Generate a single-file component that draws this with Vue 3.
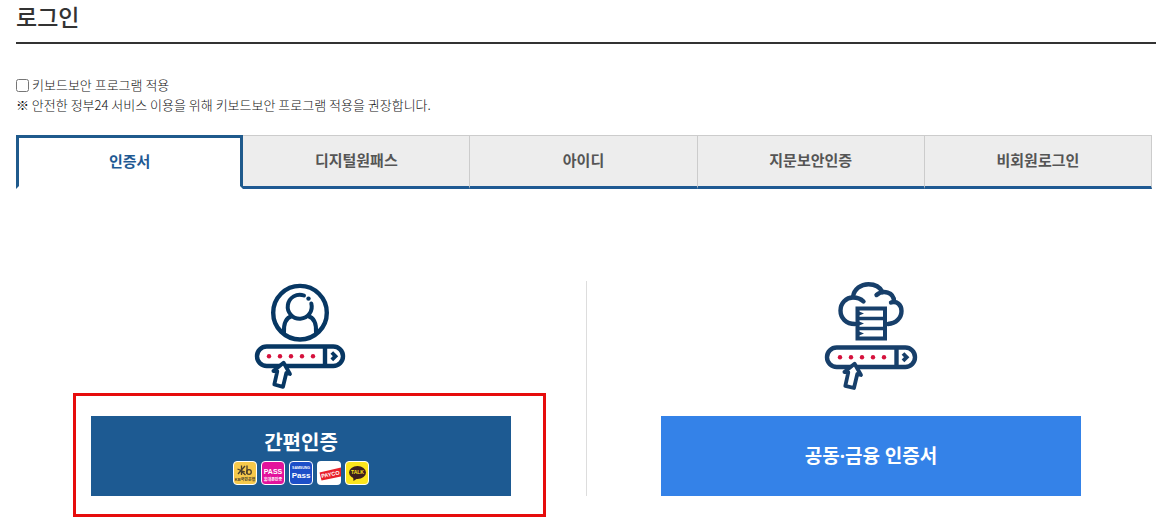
<script setup>
import { ref } from 'vue'

const keyboardSecurity = ref(false)
const active = ref(0)
const tabs = ['인증서', '디지털원패스', '아이디', '지문보안인증', '비회원로그인']
const dots = [24, 35, 46, 57, 68]
</script>

<template>
  <main class="page">
    <h1 class="title">로그인</h1>

    <div class="notice">
      <div class="check">
        <input id="keyboard-security" v-model="keyboardSecurity" type="checkbox" />
        <label for="keyboard-security">키보드보안 프로그램 적용</label>
      </div>
      <p>※ 안전한 정부24 서비스 이용을 위해 키보드보안 프로그램 적용을 권장합니다.</p>
    </div>

    <div class="tabs" role="tablist">
      <button
        v-for="(tab, i) in tabs"
        :key="tab"
        type="button"
        role="tab"
        class="tab"
        :class="{ active: active === i }"
        :aria-selected="active === i"
        @click="active = i"
      >{{ tab }}</button>
    </div>

    <div class="methods">
      <section class="method">
        <svg class="art" viewBox="0 0 112 120" aria-hidden="true">
          <g fill="none" stroke="#073763" stroke-width="4.4">
            <circle cx="55" cy="37.7" r="26.8" />
            <path d="M59 20.5A12 12 0 1 0 66.3 28.5" stroke-width="4" stroke-linecap="round" />
            <path d="M39 58C38.5 50 40 43 47 41M71 58C71.5 50 70 43 63 41" stroke-width="4" />
            <rect x="12" y="71.5" width="86" height="19.5" rx="9.7" />
            <path d="M80 72V91" />
            <path d="M86.8 77.5L90.5 81.2L86.8 84.9" stroke-width="3.8" />
          </g>
          <circle cx="63.5" cy="23.6" r="2.2" fill="#073763" />
          <circle v-for="x in dots" :key="x" :cx="x" cy="81.2" r="2.2" fill="#d5113c" />
          <path d="M38.6 87.8L45 99L41.3 98L38 111.8L29.3 109.5L32.3 96.4L28.4 96Z" fill="#fff" stroke="#073763" stroke-width="3.8" stroke-linejoin="round" />
        </svg>
        <button type="button" class="action simple">
          <span>간편인증</span>
          <span class="logos">
            <svg viewBox="0 0 24 24" aria-hidden="true">
              <rect x=".5" y=".5" width="23" height="23" rx="3.5" fill="#f7c94b" stroke="#fff" />
              <path d="M4.5 8L12 11M8.5 4.5V14M12 5L5 13M7 9L12.5 14M14 4.5V13" stroke="#4b3f2c" stroke-width="1.3" fill="none" />
              <circle cx="16" cy="11" r="2.3" stroke="#4b3f2c" stroke-width="1.3" fill="none" />
              <text x="12" y="20" class="tiny" font-size="4" fill="#4b3f2c">KB국민은행</text>
            </svg>
            <svg viewBox="0 0 24 24" aria-hidden="true">
              <rect x=".5" y=".5" width="23" height="23" rx="3.5" fill="#e3139c" stroke="#fff" />
              <text x="12" y="12.5" class="tiny" font-size="7">PASS</text>
              <text x="12" y="19.5" class="tiny" font-size="4">휴대폰인증</text>
            </svg>
            <svg viewBox="0 0 24 24" aria-hidden="true">
              <rect x=".5" y=".5" width="23" height="23" rx="3.5" fill="#1d4fc8" stroke="#fff" />
              <text x="12" y="8" class="tiny" font-size="3.5">SAMSUNG</text>
              <text x="12" y="17" class="tiny" font-size="8">Pass</text>
            </svg>
            <svg viewBox="0 0 24 24" aria-hidden="true">
              <rect width="24" height="24" rx="4" fill="#fff" />
              <path d="M2.5 11.5L24 6.5V15.5L4.5 19.5Z" fill="#e8202b" />
              <text x="13.3" y="15.3" class="tiny" font-size="5.5" transform="rotate(-12 13 13)">PAYCO</text>
            </svg>
            <svg viewBox="0 0 24 24" aria-hidden="true">
              <rect x=".5" y=".5" width="23" height="23" rx="3.5" fill="#fce51d" stroke="#fff" />
              <ellipse cx="12.5" cy="11.5" rx="8.5" ry="6.5" fill="#3c1f1e" />
              <path d="M8 15L8.5 20L13 17Z" fill="#3c1f1e" />
              <text x="12.5" y="13.4" class="tiny" font-size="5" fill="#fce51d">TALK</text>
            </svg>
          </span>
          <span class="highlight"></span>
        </button>
      </section>

      <section class="method">
        <svg class="art" viewBox="0 0 112 120" aria-hidden="true">
          <g fill="none" stroke="#173f6a" stroke-width="4.4" stroke-linecap="round">
            <path d="M40 49C31 49 25.5 43 25.5 35.5C25.5 28 31 22.5 38 22.5C42 22.5 46 24 48.5 26.5" />
            <path d="M38 22C39 14 46 9.2 53.5 9.2C60 9.2 65 12 67.5 17" />
            <path d="M61.5 20C68 14.5 79 17 79 26.5" />
            <path d="M76 27.5C82 25.5 86.5 30 86.5 36C86.5 43 81 48.5 73 49" />
          </g>
          <g fill="#fff" stroke="#173f6a" stroke-width="4">
            <rect x="42.5" y="33.5" width="27.5" height="30" />
            <path d="M42.5 43.5H69.5M42.5 53.5H69.5" stroke-width="3.4" />
          </g>
          <path d="M43 36L49 38.5L43 41ZM43 46L49 48.5L43 51ZM43 56L49 58.5L43 61Z" fill="#173f6a" />
          <g fill="none" stroke="#173f6a" stroke-width="4.4">
            <rect x="12" y="72.5" width="88" height="19.5" rx="9.7" />
            <path d="M81.5 73V92" />
            <path d="M88 78.5L91.7 82.2L88 85.9" stroke-width="3.8" />
          </g>
          <circle v-for="x in dots" :key="x" :cx="x + 1" cy="82.2" r="2.2" fill="#d5113c" />
          <path d="M39.6 88.8L46 100L42.3 99L39 113L30.300 110.8L33.3 97.4L29.4 97Z" fill="#fff" stroke="#173f6a" stroke-width="3.8" stroke-linejoin="round" />
        </svg>
        <button type="button" class="action joint">공동·금융 인증서</button>
      </section>
    </div>
  </main>
</template>

<style>
body {
  margin: 0;
  background: #fff;
}
</style>

<style scoped>
.page {
  box-sizing: border-box;
  min-height: 100vh;
  padding: 0 3px 16px 16px;
  font-family: "Noto Sans CJK KR", sans-serif;
  color: #333;
}
.title {
  margin: 0;
  height: 42px;
  line-height: 32px;
  font-size: 23px;
  font-weight: 500;
  border-bottom: 2px solid #333;
}
.notice {
  margin-top: 31px;
  font-size: 13px;
  line-height: 20px;
  font-weight: 300;
  color: #111;
}
.check {
  display: flex;
  align-items: center;
  gap: 3px;
}
.check input {
  width: 13px;
  height: 13px;
  margin: 0;
}
.notice p {
  margin: 0;
}
.tabs {
  display: grid;
  grid-template-columns: repeat(5, 1fr);
  margin: 20px 4px 0 0;
}
.tab {
  box-sizing: border-box;
  height: 54px;
  padding: 0 0 3px;
  border: solid #ccc;
  border-width: 1px 1px 3px 0;
  border-bottom-color: #1f5a93;
  background: #ededed;
  color: #555;
  font-family: inherit;
  font-size: 15px;
  font-weight: 700;
}
.tab.active {
  border: 3px solid #1f5a8c;
  border-bottom-color: transparent;
  background: #fff;
  color: #1f5a93;
}
.methods {
  display: flex;
  margin-top: 92px;
}
.method {
  flex: 1 1 0;
  display: flex;
  flex-direction: column;
  align-items: center;
  height: 215px;
}
.method + .method {
  box-shadow: inset 1px 0 #ddd;
}
.art {
  width: 112px;
  height: 120px;
  margin-top: -6px;
  flex: none;
}
.action {
  position: relative;
  box-sizing: border-box;
  display: flex;
  flex-direction: column;
  align-items: center;
  justify-content: center;
  width: 420px;
  max-width: 90%;
  height: 80px;
  margin-top: 21px;
  padding: 0;
  border: 0;
  color: #fff;
  font-family: inherit;
  font-size: 20px;
  line-height: 30px;
  font-weight: 700;
  flex: none;
}
.simple {
  background: #1d5a92;
}
.joint {
  background: #3482e8;
  font-family: "Noto Sans", "Noto Sans CJK KR", sans-serif;
  font-size: 19px;
}
.logos {
  display: flex;
  gap: 4px;
  margin-top: 4px;
}
.logos svg {
  width: 24px;
  height: 24px;
}
.tiny {
  fill: #fff;
  font-family: "Liberation Sans", "Noto Sans CJK KR", sans-serif;
  font-weight: 700;
  text-anchor: middle;
}
.tiny[fill="#4b3f2c"] {
  fill: #4b3f2c;
}
.tiny[fill="#fce51d"] {
  fill: #fce51d;
}
.highlight {
  position: absolute;
  inset: -23px -35px -21px -18px;
  border: 3px solid #e60c0c;
  pointer-events: none;
}
</style>
